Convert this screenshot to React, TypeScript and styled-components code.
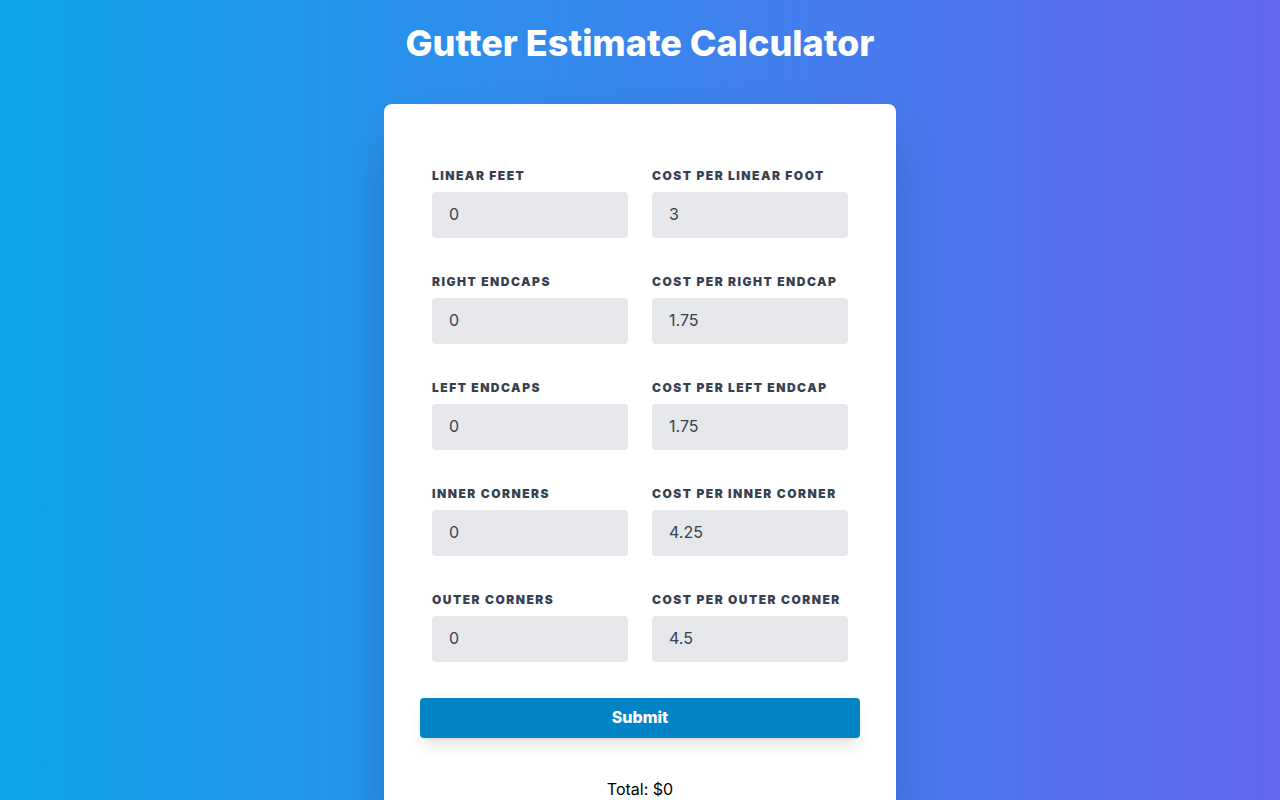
import React from "react";
import styled, { createGlobalStyle } from "styled-components";

const GlobalStyle = createGlobalStyle`
  html, body { margin: 0; padding: 0; }
  body {
    font-family: Inter, "Noto Sans", sans-serif;
    min-height: 100vh;
    background: linear-gradient(to right, #0ea5e9, #6366f1);
  }
`;

const Page = styled.div`
  min-height: 100vh;
  display: flex;
  flex-direction: column;
  align-items: center;
  padding-top: 23px;
  box-sizing: border-box;
`;

const Title = styled.h1`
  margin: 0 0 41px;
  font-size: 36px;
  line-height: 40px;
  font-weight: 800;
  color: #ffffff;
  text-align: center;
`;

const Card = styled.div`
  width: 512px;
  box-sizing: border-box;
  background: #ffffff;
  border-radius: 8px;
  padding: 64px 36px 0;
  box-shadow: 0 25px 50px -12px rgba(0, 0, 0, 0.25);
  min-height: 720px;
`;

const Grid = styled.div`
  display: grid;
  grid-template-columns: 1fr 1fr;
  column-gap: 24px;
  row-gap: 36px;
  padding: 0 12px;
`;

const Field = styled.div`
  display: flex;
  flex-direction: column;
`;

const Label = styled.label`
  font-size: 12px;
  line-height: 16px;
  font-weight: 900;
  letter-spacing: 0.125em;
  text-transform: uppercase;
  color: #374151;
  margin-bottom: 8px;
`;

const Input = styled.input`
  box-sizing: border-box;
  width: 100%;
  height: 46px;
  border: none;
  border-radius: 4px;
  background: #e5e7eb;
  padding: 0 17px 2px;
  font-family: Inter, "Noto Sans", sans-serif;
  font-size: 16px;
  color: #374151;
  outline: none;
`;

const Button = styled.button`
  display: block;
  width: 100%;
  height: 40px;
  margin-top: 36px;
  padding: 0 0 2px;
  border: none;
  border-radius: 4px;
  background: #0284c7;
  color: #ffffff;
  font-family: Inter, "Noto Sans", sans-serif;
  font-size: 16px;
  font-weight: 800;
  box-shadow: 0 10px 15px -3px rgba(0, 0, 0, 0.1), 0 4px 6px -4px rgba(0, 0, 0, 0.1);
  cursor: pointer;
`;

const Total = styled.p`
  margin: 39px 0 0;
  text-align: center;
  font-size: 16px;
  line-height: 24px;
  color: #000000;
`;

const fields: [string, string][] = [
  ["Linear Feet", "0"],
  ["Cost per Linear Foot", "3"],
  ["Right Endcaps", "0"],
  ["Cost per Right Endcap", "1.75"],
  ["Left Endcaps", "0"],
  ["Cost per Left Endcap", "1.75"],
  ["Inner Corners", "0"],
  ["Cost per Inner Corner", "4.25"],
  ["Outer Corners", "0"],
  ["Cost per Outer Corner", "4.5"],
];

export default function App() {
  return (
    <>
      <GlobalStyle />
      <Page>
        <Title>Gutter Estimate Calculator</Title>
        <Card>
          <Grid>
            {fields.map(([label, value]) => (
              <Field key={label}>
                <Label>{label}</Label>
                <Input type="text" defaultValue={value} />
              </Field>
            ))}
          </Grid>
          <Button type="button">Submit</Button>
          <Total>Total: $0</Total>
        </Card>
      </Page>
    </>
  );
}
